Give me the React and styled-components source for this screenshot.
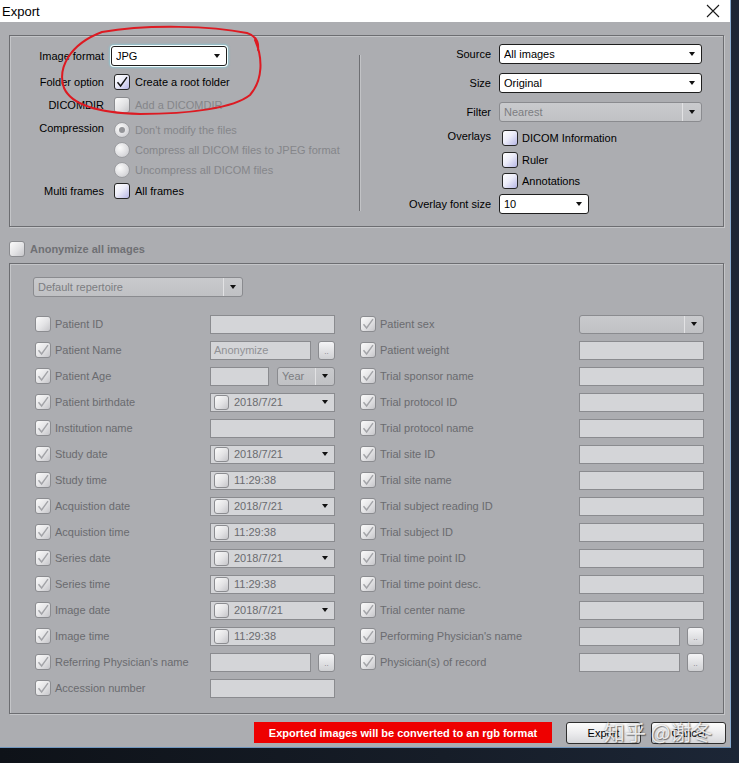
import React from 'react';
import styled, { createGlobalStyle } from 'styled-components';

const GlobalStyle = createGlobalStyle`
  html, body {
    margin: 0;
    padding: 0;
    background: #0b0e13;
  }
  body {
    font-family: "Liberation Sans", Arial, sans-serif;
    font-size: 11px;
  }
`;

const Screen = styled.div`
  position: relative;
  width: 739px;
  height: 763px;
  overflow: hidden;
  background: linear-gradient(90deg, #0e1218 0%, #161d28 60%, #1c2636 100%);
`;

const Window = styled.div`
  box-sizing: border-box;
  width: 731px;
  height: 748px;
  display: flex;
  flex-direction: column;
  background: #acadb1;
  border-right: 1px solid #88abcf;
  border-bottom: 1px solid #6f95bd;
`;

const TitleBar = styled.div`
  flex: none;
  height: 22px;
  background: #fff;
  display: flex;
  align-items: center;
  justify-content: space-between;
  padding: 0 10px 0 2px;
`;

const Title = styled.span`
  font-size: 13px;
  color: #000;
`;

const Body = styled.div`
  flex: 1;
  display: flex;
  flex-direction: column;
  padding: 13px 6px 0 9px;
`;

const GroupBox = styled.div`
  box-sizing: border-box;
  height: ${p => p.$h}px;
  border: 1px solid #6c6d71;
  box-shadow: inset 1px 1px 0 #c4c5c8, 1px 1px 0 #c4c5c8;
`;

const TopGroup = styled(GroupBox)`
  display: flex;
`;

const LeftPane = styled.div`
  width: 349px;
  padding-top: 7px;
  display: flex;
  flex-direction: column;
`;

const RightPane = styled.div`
  flex: 1;
  padding-top: 7px;
  display: flex;
  flex-direction: column;
`;

const Separator = styled.div`
  width: 1px;
  margin: 19px 0 15px;
  background: #6e6f73;
  border-right: 1px solid #c2c3c6;
`;

const FormRow = styled.div`
  display: grid;
  grid-template-columns: ${p => p.$label}px 1fr;
  column-gap: ${p => p.$gap}px;
  align-items: ${p => (p.$top ? 'start' : 'center')};
  height: ${p => p.$h}px;
  margin-top: ${p => p.$mt || 0}px;
`;

const Label = styled.span`
  text-align: right;
  color: #000;
  white-space: nowrap;
  padding-top: ${p => p.$pt || 0}px;
`;

const OptionList = styled.div`
  display: flex;
  flex-direction: column;
`;

const Option = styled.div`
  display: flex;
  align-items: center;
  gap: ${p => p.$gap || 5}px;
  height: ${p => p.$h || 20}px;
  padding-left: 3px;
  color: ${p => (p.$disabled ? '#85868a' : '#000')};
  white-space: nowrap;
`;

const Box = styled.span`
  flex: none;
  box-sizing: border-box;
  width: ${p => p.$size || 16}px;
  height: ${p => p.$size || 16}px;
  border-radius: 3px;
  display: inline-flex;
  align-items: center;
  justify-content: center;
  border: 1px solid ${p => (p.$disabled ? '#8b8c90' : '#262626')};
  background: ${p =>
    p.$disabled
      ? 'linear-gradient(135deg, #fbfbfb 0%, #e3e3e5 55%, #c5c5c9 100%)'
      : 'linear-gradient(135deg, #ffffff 0%, #ededf9 45%, #b7b7e6 100%)'};
`;

const Radio = styled.span`
  flex: none;
  box-sizing: border-box;
  width: 16px;
  height: 16px;
  border-radius: 50%;
  display: inline-flex;
  align-items: center;
  justify-content: center;
  border: 1px solid #9c9da1;
  background: radial-gradient(circle at 35% 35%, #fbfbfb 0%, #dcdcdf 60%, #bfc0c4 100%);
  &::after {
    content: '';
    width: 6px;
    height: 6px;
    border-radius: 50%;
    background: ${p => (p.$on ? '#949599' : 'transparent')};
  }
`;

const Combo = styled.div`
  box-sizing: border-box;
  width: ${p => p.$w}px;
  height: ${p => p.$h || 20}px;
  display: flex;
  align-items: center;
  border-radius: 3px;
  padding-left: 4px;
  border: 1px solid ${p => (p.$disabled ? '#8a8b8f' : '#1e1e1e')};
  background: ${p => (p.$disabled ? 'linear-gradient(180deg, #c9cacd, #c0c1c4)' : '#fff')};
  color: ${p => (p.$disabled ? '#7c7d81' : '#000')};
  box-shadow: ${p => (p.$focus ? '0 0 0 1px #f2feff, 0 0 2px 2px rgba(110, 215, 235, 0.45)' : 'none')};
`;

const ComboText = styled.span`
  flex: 1;
  white-space: nowrap;
  overflow: hidden;
`;

const ComboButton = styled.span`
  flex: none;
  width: 18px;
  align-self: stretch;
  display: flex;
  align-items: center;
  justify-content: center;
  border-left: 1px solid ${p => (p.$disabled ? '#e2e2e4' : 'transparent')};
`;

const Arrow = styled.span`
  width: 0;
  height: 0;
  border-left: 3.5px solid transparent;
  border-right: 3.5px solid transparent;
  border-top: 4px solid #111;
`;

const AnonRow = styled.div`
  display: flex;
  align-items: center;
  gap: 5px;
  height: 22px;
  margin: 11px 0 3px;
  font-weight: bold;
  color: #6f7074;
`;

const BottomGroup = styled(GroupBox)`
  padding: 13px 0 0 23px;
`;

const Columns = styled.div`
  display: flex;
  gap: 25px;
  margin: 14px 0 0 2px;
`;

const Column = styled.div`
  width: ${p => p.$w}px;
  display: flex;
  flex-direction: column;
`;

const FieldRow = styled.div`
  height: 26px;
  display: flex;
  align-items: center;
  gap: 4px;
`;

const RowLabel = styled.span`
  flex: 1;
  color: #6a6b6f;
  white-space: nowrap;
`;

const Slot = styled.div`
  flex: none;
  width: 125px;
  display: flex;
  justify-content: space-between;
  align-items: center;
`;

const Field = styled.div`
  box-sizing: border-box;
  width: ${p => p.$w || 125}px;
  height: 19px;
  display: flex;
  align-items: center;
  gap: 5px;
  padding: 0 3px;
  border: 1px solid #8a8b8f;
  background: #d4d5d8;
  color: ${p => (p.$placeholder ? '#909195' : '#6a6b6f')};
  white-space: nowrap;
`;

const FieldText = styled.span`
  flex: 1;
`;

const FieldArrow = styled(Arrow)`
  margin-right: 3px;
`;

const DotsButton = styled.div`
  box-sizing: border-box;
  width: 17px;
  height: 19px;
  border-radius: 3px;
  border: 1px solid #8a8b8f;
  background: linear-gradient(180deg, #f4f4f6, #cfd0d3);
  color: #7c7d81;
  font-size: 8px;
  display: flex;
  align-items: flex-end;
  justify-content: center;
  padding-bottom: 3px;
  line-height: 1;
`;

const Footer = styled.div`
  display: flex;
  justify-content: flex-end;
  align-items: flex-start;
  margin: 8px -2px 0 0;
`;

const Warning = styled.div`
  width: 298px;
  height: 21px;
  margin-right: 14px;
  background: #ee0000;
  color: #fff;
  font-weight: bold;
  display: flex;
  align-items: center;
  justify-content: center;
  white-space: nowrap;
`;

const Button = styled.div`
  box-sizing: border-box;
  width: 75px;
  height: 22px;
  margin-left: ${p => p.$ml || 0}px;
  border: 1px solid #2e2e2e;
  border-radius: 3px;
  background: linear-gradient(180deg, #fdfdfd 0%, #ececee 50%, #d6d7da 100%);
  color: #000;
  display: flex;
  align-items: center;
  justify-content: center;
`;

const Scribble = styled.svg`
  position: absolute;
  left: 0;
  top: 0;
  pointer-events: none;
`;

const Watermark = styled.div`
  position: absolute;
  left: 604px;
  top: 716px;
  font-family: "Noto Sans CJK SC", "Liberation Sans", sans-serif;
  font-size: 21px;
  color: rgba(255, 255, 255, 0.82);
  text-shadow: 1px 1px 1px rgba(40, 40, 40, 0.55), 0 0 2px rgba(40, 40, 40, 0.4);
  white-space: nowrap;
  pointer-events: none;
`;

const Check = ({ color }) => (
  <svg width="12" height="12" viewBox="0 0 12 12">
    <path d="M1.5 6.2 L4.6 10 L11 1.2" fill="none" stroke={color} strokeWidth="1.4" />
  </svg>
);

const CheckBox = ({ checked, disabled, size }) => (
  <Box $disabled={disabled} $size={size}>
    {checked && <Check color={disabled ? '#a3a4a8' : '#111'} />}
  </Box>
);

const Select = ({ w, value, disabled, focus }) => (
  <Combo $w={w} $disabled={disabled} $focus={focus}>
    <ComboText>{value}</ComboText>
    <ComboButton $disabled={disabled}>
      <Arrow />
    </ComboButton>
  </Combo>
);

const CloseIcon = () => (
  <svg width="14" height="14" viewBox="0 0 14 14">
    <path d="M1 1 L13 13 M13 1 L1 13" stroke="#1a1a1a" strokeWidth="1.1" />
  </svg>
);

const leftRows = [
  ['Patient ID', 'field', false],
  ['Patient Name', 'name'],
  ['Patient Age', 'age'],
  ['Patient birthdate', 'date'],
  ['Institution name', 'field'],
  ['Study date', 'date'],
  ['Study time', 'time'],
  ['Acquistion date', 'date'],
  ['Acquistion time', 'time'],
  ['Series date', 'date'],
  ['Series time', 'time'],
  ['Image date', 'date'],
  ['Image time', 'time'],
  ["Referring Physician's name", 'button'],
  ['Accession number', 'field'],
];

const rightRows = [
  ['Patient sex', 'combo'],
  ['Patient weight', 'field'],
  ['Trial sponsor name', 'field'],
  ['Trial protocol ID', 'field'],
  ['Trial protocol name', 'field'],
  ['Trial site ID', 'field'],
  ['Trial site name', 'field'],
  ['Trial subject reading ID', 'field'],
  ['Trial subject ID', 'field'],
  ['Trial time point ID', 'field'],
  ['Trial time point desc.', 'field'],
  ['Trial center name', 'field'],
  ["Performing Physician's name", 'button'],
  ['Physician(s) of record', 'button'],
];

const Control = ({ kind }) => {
  switch (kind) {
    case 'name':
      return (
        <Slot>
          <Field $w={101} $placeholder>Anonymize</Field>
          <DotsButton>..</DotsButton>
        </Slot>
      );
    case 'button':
      return (
        <Slot>
          <Field $w={101} />
          <DotsButton>..</DotsButton>
        </Slot>
      );
    case 'age':
      return (
        <Slot>
          <Field $w={59} />
          <Combo $w={58} $h={19} $disabled>
            <ComboText>Year</ComboText>
            <ComboButton $disabled>
              <Arrow />
            </ComboButton>
          </Combo>
        </Slot>
      );
    case 'date':
    case 'time':
      return (
        <Slot>
          <Field>
            <CheckBox disabled size={15} />
            <FieldText>{kind === 'date' ? '2018/7/21' : '11:29:38'}</FieldText>
            {kind === 'date' && <FieldArrow />}
          </Field>
        </Slot>
      );
    case 'combo':
      return (
        <Slot>
          <Combo $w={125} $h={19} $disabled>
            <ComboText />
            <ComboButton $disabled>
              <Arrow />
            </ComboButton>
          </Combo>
        </Slot>
      );
    default:
      return (
        <Slot>
          <Field />
        </Slot>
      );
  }
};

const AnonColumn = ({ rows, w }) => (
  <Column $w={w}>
    {rows.map(([label, kind, checked = true]) => (
      <FieldRow key={label}>
        <CheckBox checked={checked} disabled />
        <RowLabel>{label}</RowLabel>
        <Control kind={kind} />
      </FieldRow>
    ))}
  </Column>
);

export default function App() {
  return (
    <Screen>
      <GlobalStyle />
      <Window>
        <TitleBar>
          <Title>Export</Title>
          <CloseIcon />
        </TitleBar>
        <Body>
          <TopGroup $h={192}>
            <LeftPane>
              <FormRow $label={94} $gap={7} $h={26}>
                <Label>Image format</Label>
                <Select w={116} value="JPG" focus />
              </FormRow>
              <FormRow $label={94} $gap={7} $h={26}>
                <Label>Folder option</Label>
                <Option>
                  <CheckBox checked />
                  Create a root folder
                </Option>
              </FormRow>
              <FormRow $label={94} $gap={7} $h={20}>
                <Label>DICOMDIR</Label>
                <Option $disabled>
                  <CheckBox disabled />
                  Add a DICOMDIR
                </Option>
              </FormRow>
              <FormRow $label={94} $gap={7} $h={60} $mt={5} $top>
                <Label $pt={2}>Compression</Label>
                <OptionList>
                  <Option $disabled>
                    <Radio $on />
                    Don't modify the files
                  </Option>
                  <Option $disabled>
                    <Radio />
                    Compress all DICOM files to JPEG format
                  </Option>
                  <Option $disabled>
                    <Radio />
                    Uncompress all DICOM files
                  </Option>
                </OptionList>
              </FormRow>
              <FormRow $label={94} $gap={7} $h={22}>
                <Label>Multi frames</Label>
                <Option>
                  <CheckBox />
                  All frames
                </Option>
              </FormRow>
            </LeftPane>
            <Separator />
            <RightPane>
              <FormRow $label={130} $gap={8} $h={22}>
                <Label>Source</Label>
                <Select w={203} value="All images" />
              </FormRow>
              <FormRow $label={130} $gap={8} $h={22} $mt={7}>
                <Label>Size</Label>
                <Select w={203} value="Original" />
              </FormRow>
              <FormRow $label={130} $gap={8} $h={22} $mt={7}>
                <Label>Filter</Label>
                <Select w={203} value="Nearest" disabled />
              </FormRow>
              <FormRow $label={130} $gap={8} $h={65} $mt={4} $top>
                <Label $pt={3}>Overlays</Label>
                <OptionList>
                  <Option $h={22} $gap={4}>
                    <CheckBox />
                    DICOM Information
                  </Option>
                  <Option $h={21} $gap={4}>
                    <CheckBox />
                    Ruler
                  </Option>
                  <Option $h={22} $gap={4}>
                    <CheckBox />
                    Annotations
                  </Option>
                </OptionList>
              </FormRow>
              <FormRow $label={130} $gap={8} $h={22} $mt={1}>
                <Label>Overlay font size</Label>
                <Select w={90} value="10" />
              </FormRow>
            </RightPane>
          </TopGroup>

          <AnonRow>
            <CheckBox disabled />
            Anonymize all images
          </AnonRow>

          <BottomGroup $h={451}>
            <Combo $w={210} $disabled>
              <ComboText>Default repertoire</ComboText>
              <ComboButton $disabled>
                <Arrow />
              </ComboButton>
            </Combo>
            <Columns>
              <AnonColumn rows={leftRows} w={300} />
              <AnonColumn rows={rightRows} w={344} />
            </Columns>
          </BottomGroup>

          <Footer>
            <Warning>Exported images will be converted to an rgb format</Warning>
            <Button>Export</Button>
            <Button $ml={10}>Cancel</Button>
          </Footer>
        </Body>
      </Window>

      <Scribble width="739" height="763" viewBox="0 0 739 763">
        <path
          d="M255 40 C263 58, 263 80, 250 95 C234 108, 190 114, 140 114 C100 113, 72 106, 64 88 C57 68, 70 44, 102 32 C148 24, 212 26, 247 33 C256 36, 259 42, 258 50"
          fill="none"
          stroke="#dd1a22"
          strokeWidth="2"
          strokeLinecap="round"
        />
      </Scribble>
      <Watermark>知乎 @谢冬</Watermark>
    </Screen>
  );
}
